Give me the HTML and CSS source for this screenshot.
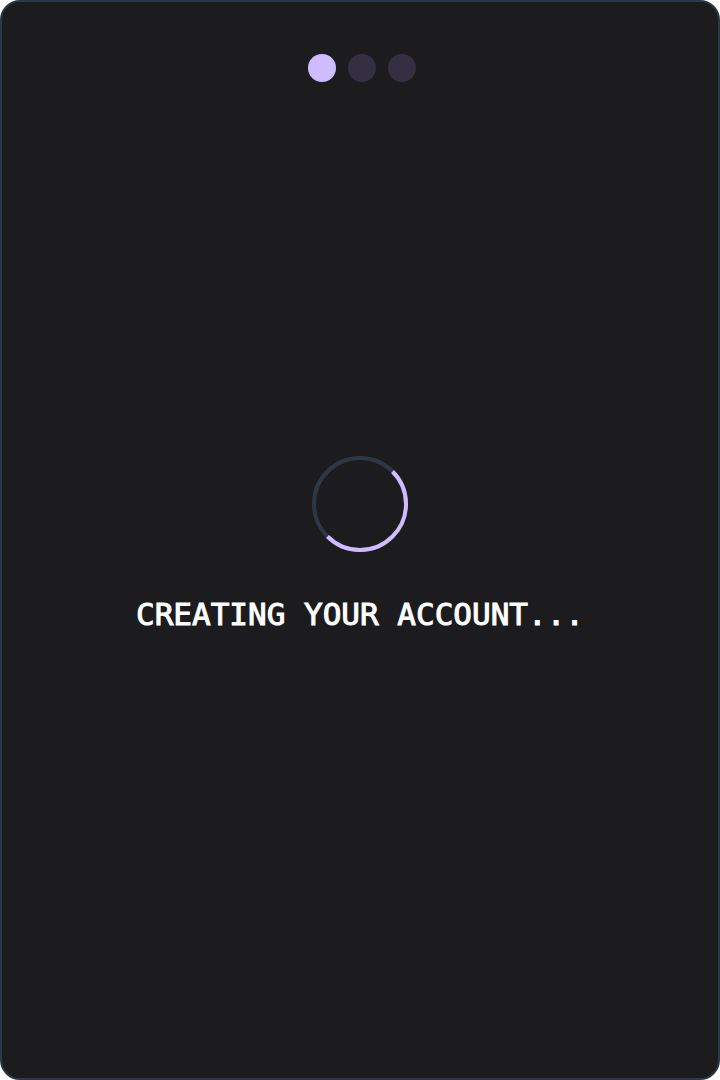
FILE: index.html
```
<!DOCTYPE html>
<html lang="en">
<head>
<meta charset="utf-8">
<meta name="viewport" content="width=device-width, initial-scale=1">
<title>Creating your account</title>
<link rel="stylesheet" href="styles.css">
</head>
<body>
<main class="card">
  <ol class="steps" aria-label="Step 1 of 3">
    <li class="step step-active" aria-current="step"></li>
    <li class="step"></li>
    <li class="step"></li>
  </ol>
  <section class="status" role="status">
    <svg class="spinner" viewBox="0 0 96 96" fill="none" stroke-width="4" aria-hidden="true">
      <circle class="spinner-track" cx="48" cy="48" r="46"/>
      <path class="spinner-arc" d="M80.53 15.47A46 46 0 0 1 15.47 80.53"/>
    </svg>
    <h1 class="message">CREATING YOUR ACCOUNT...</h1>
  </section>
</main>
</body>
</html>
```

FILE: styles.css
```
* {
  box-sizing: border-box;
}

body {
  margin: 0;
  background: #ffffff;
}

.card {
  display: grid;
  grid-template-rows: auto 1fr;
  min-height: 100vh;
  padding: 52px 24px 50px;
  border: 2px solid #2d3748;
  border-radius: 20px;
  background: #1c1c1e;
}

.steps {
  display: flex;
  justify-content: center;
  gap: 12px;
  margin: 0;
  padding: 0 0 0 4px;
  list-style: none;
}

.step {
  width: 28px;
  height: 28px;
  border-radius: 50%;
  background: #352f44;
}

.step-active {
  background: #cfbcff;
}

.status {
  display: flex;
  flex-direction: column;
  align-items: center;
  justify-content: center;
  gap: 42px;
  padding-bottom: 20px;
}

.spinner {
  width: 96px;
  height: 96px;
}

.spinner-track {
  stroke: #2d3748;
}

.spinner-arc {
  stroke: #cfbcff;
}

.message {
  margin: 0;
  color: #ffffff;
  font: 400 31px/40px "DejaVu Sans Mono", monospace;
  -webkit-text-stroke: 1px #ffffff;
  text-align: center;
}
```
